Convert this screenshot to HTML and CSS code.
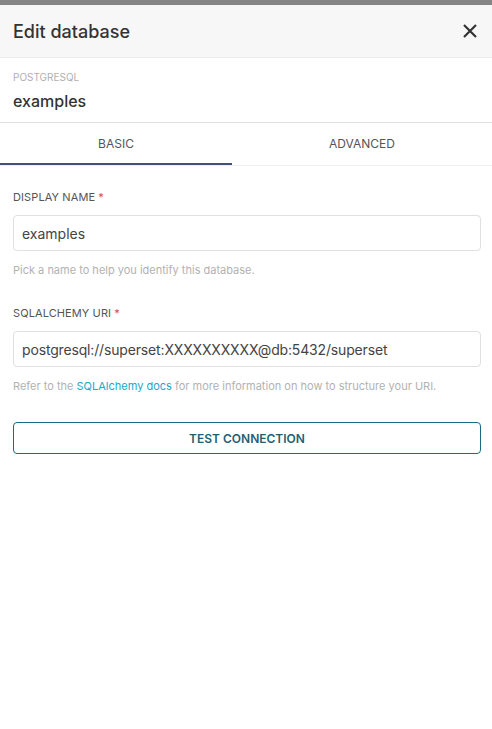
FILE: index.html
```html
<!DOCTYPE html>
<html>
<head>
<meta charset="utf-8">
<link rel="stylesheet" href="styles.css">
</head>
<body>
<div class="topbar"></div>
<div class="modal">
  <div class="header">
    <div class="title">Edit database</div>
    <svg class="close" width="16" height="16" viewBox="0 0 16 16"><path d="M2 2 L14 14 M14 2 L2 14" stroke="#333" stroke-width="2.2" fill="none"/></svg>
  </div>
  <div class="dbinfo">
    <div class="engine">POSTGRESQL</div>
    <div class="dbname">examples</div>
  </div>
  <div class="tabs">
    <div class="tab active">BASIC</div>
    <div class="tab">ADVANCED</div>
  </div>
  <div class="form">
    <div class="field">
      <div class="label">DISPLAY NAME<span class="req">*</span></div>
      <div class="input">examples</div>
      <div class="help">Pick a name to help you identify this database.</div>
    </div>
    <div class="field">
      <div class="label">SQLALCHEMY URI<span class="req">*</span></div>
      <div class="input uri">postgresql://superset:XXXXXXXXXX@db:5432/superset</div>
      <div class="help">Refer to the <span class="link">SQLAlchemy docs</span> for more information on how to structure your URI.</div>
    </div>
    <div class="button">TEST CONNECTION</div>
  </div>
</div>
</body>
</html>
```

FILE: styles.css
```css
* { box-sizing: border-box; }
html, body { margin: 0; padding: 0; background: #fff; }
body { font-family: Inter, "Noto Sans", sans-serif; color: #333; width: 492px; height: 729px; overflow: hidden; }
.topbar { height: 5px; background: #858585; }
.header {
  height: 53px;
  background: #f7f7f7;
  border-bottom: 1px solid #ececec;
  display: flex;
  align-items: center;
  justify-content: space-between;
  padding: 0 14px 0 13px;
}
.title { font-size: 18px; color: #333; font-weight: 500; }
.close { display: block; }
.dbinfo { padding: 12px 13px 10px; border-bottom: 1px solid #e0e0e0; }
.engine { font-size: 10px; color: #b0b0b0; line-height: 14px; }
.dbname { font-size: 16px; color: #333; line-height: 22px; margin-top: 6px; font-weight: 500; }
.tabs { display: flex; border-bottom: 1px solid #f0f0f0; height: 43px; }
.tab {
  display: flex;
  align-items: center;
  justify-content: center;
  font-size: 12px;
  color: #555;
}
.tab.active { border-bottom: 2px solid #444e7c; width: 232px; }
.tab:not(.active) { flex: 1; padding-bottom: 2px; }
.form { padding: 23px 11px 0 13px; }
.field { margin-bottom: 28px; }
.label { font-size: 11px; color: #555; line-height: 16px; letter-spacing: 0.1px; }
.req { color: #e04355; margin-left: 3px; }
.input {
  margin-top: 10px;
  height: 36px;
  border: 1px solid #e0e0e0;
  border-radius: 4px;
  padding: 0 8px;
  display: flex;
  align-items: center;
  font-size: 14px;
  color: #444;
}
.input.uri { letter-spacing: -0.16px; }
.help { margin-top: 12px; font-size: 11px; color: #b2b2b2; line-height: 14px; }
.link { color: #20a7c9; }
.button {
  margin-top: 29px;
  height: 32px;
  border: 1px solid #1a6b80;
  border-radius: 4px;
  display: flex;
  align-items: center;
  justify-content: center;
  font-size: 12px;
  font-weight: 600;
  color: #1f5f75;
}
```
